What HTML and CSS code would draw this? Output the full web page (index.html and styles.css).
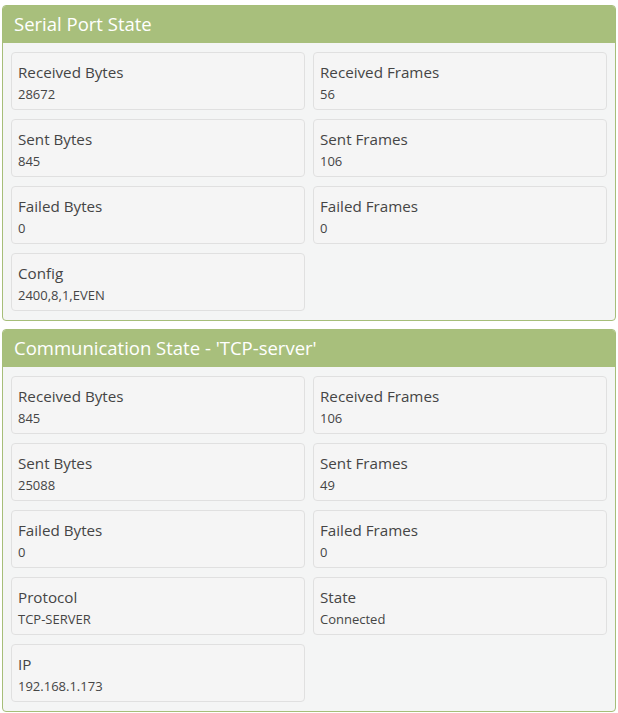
FILE: index.html
```html
<!DOCTYPE html>
<html>
<head>
<meta charset="utf-8">
<link rel="stylesheet" href="styles.css">
</head>
<body>
<div class="panel">
  <div class="panel-head">Serial Port State</div>
  <div class="panel-body">
    <div class="card"><div class="lbl">Received Bytes</div><div class="val">28672</div></div>
    <div class="card"><div class="lbl">Received Frames</div><div class="val">56</div></div>
    <div class="card"><div class="lbl">Sent Bytes</div><div class="val">845</div></div>
    <div class="card"><div class="lbl">Sent Frames</div><div class="val">106</div></div>
    <div class="card"><div class="lbl">Failed Bytes</div><div class="val">0</div></div>
    <div class="card"><div class="lbl">Failed Frames</div><div class="val">0</div></div>
    <div class="card"><div class="lbl">Config</div><div class="val">2400,8,1,EVEN</div></div>
  </div>
</div>
<div class="panel">
  <div class="panel-head">Communication State - 'TCP-server'</div>
  <div class="panel-body">
    <div class="card"><div class="lbl">Received Bytes</div><div class="val">845</div></div>
    <div class="card"><div class="lbl">Received Frames</div><div class="val">106</div></div>
    <div class="card"><div class="lbl">Sent Bytes</div><div class="val">25088</div></div>
    <div class="card"><div class="lbl">Sent Frames</div><div class="val">49</div></div>
    <div class="card"><div class="lbl">Failed Bytes</div><div class="val">0</div></div>
    <div class="card"><div class="lbl">Failed Frames</div><div class="val">0</div></div>
    <div class="card"><div class="lbl">Protocol</div><div class="val">TCP-SERVER</div></div>
    <div class="card"><div class="lbl">State</div><div class="val">Connected</div></div>
    <div class="card"><div class="lbl">IP</div><div class="val">192.168.1.173</div></div>
  </div>
</div>
</body>
</html>
```
FILE: styles.css
```css
html, body {
  margin: 0;
  background: #ffffff;
}
body {
  padding: 5px 2px 0 2px;
  font-family: "Open Sans", "Noto Sans", sans-serif;
  color: #454545;
}
.panel {
  border: 1px solid #a6be79;
  border-radius: 4px;
  background: #f4f5f5;
  margin-bottom: 8px;
  overflow: hidden;
}
.panel-head {
  background: #a8bf7c;
  color: #ffffff;
  height: 37px;
  line-height: 35px;
  padding: 0 11px;
  font-size: 18.5px;
}
.panel-body {
  display: grid;
  grid-template-columns: 1fr 1fr;
  gap: 9px 8px;
  padding: 9px 8px 9px 8px;
}
.card {
  box-sizing: border-box;
  height: 58px;
  border: 1px solid #e0e0e0;
  border-radius: 4px;
  background: #f5f5f5;
  padding: 8px 6px 0 6px;
}
.lbl {
  font-size: 15.2px;
  line-height: 22px;
}
.val {
  font-size: 13px;
  line-height: 22px;
}
```
